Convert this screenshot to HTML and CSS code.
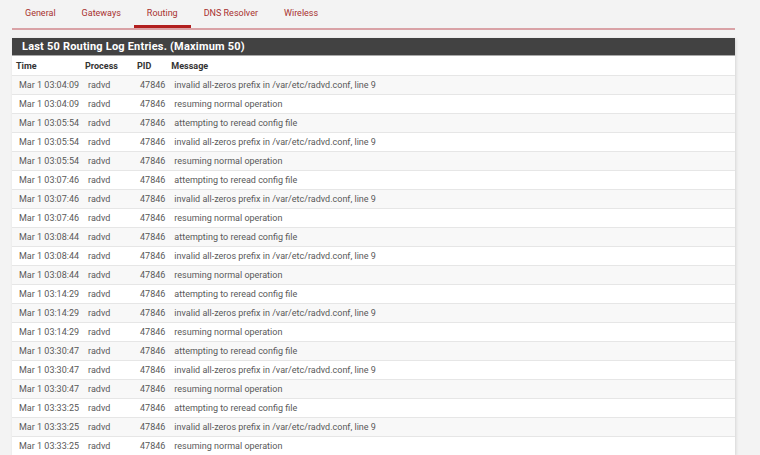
FILE: index.html
```html
<!DOCTYPE html>
<html lang="en">

<head>
    <meta charset="UTF-8">
    <title>Status: System Logs: Routing</title>
    <link rel="stylesheet" href="styles.css">
</head>

<body>
    <ul class="tabs">
        <li><a href="#">General</a></li>
        <li><a href="#">Gateways</a></li>
        <li class="active"><a href="#">Routing</a></li>
        <li><a href="#">DNS Resolver</a></li>
        <li><a href="#">Wireless</a></li>
    </ul>

    <div class="panel">
        <h2 class="panel-title">Last 50 Routing Log Entries. (Maximum 50)</h2>
        <table class="log">
            <thead>
                <tr>
                    <th class="col-time">Time</th>
                    <th class="col-proc">Process</th>
                    <th class="col-pid">PID</th>
                    <th>Message</th>
                </tr>
            </thead>
            <tbody id="logBody"></tbody>
        </table>
    </div>

    <script>
        const times = ['03:04:09', '03:05:54', '03:07:46', '03:08:44', '03:14:29', '03:30:47', '03:33:25'];
        const messages = [
            'invalid all-zeros prefix in /var/etc/radvd.conf, line 9',
            'resuming normal operation',
            'attempting to reread config file'
        ];

        // build the 20 visible entries: each time gets reread / invalid / resuming
        const entries = [];
        times.forEach((t, i) => {
            if (i > 0) entries.push({ time: t, msg: messages[2] });
            entries.push({ time: t, msg: messages[0] });
            entries.push({ time: t, msg: messages[1] });
        });

        const body = document.getElementById('logBody');
        entries.forEach(e => {
            body.innerHTML += `
                <tr>
                    <td>Mar 1 ${e.time}</td>
                    <td>radvd</td>
                    <td>47846</td>
                    <td>${e.msg}</td>
                </tr>`;
        });
    </script>
</body>

</html>
```

FILE: styles.css
```css
body {
    font-family: 'Roboto', 'Liberation Sans', sans-serif;
    background-color: #f3f3f3;
    margin: 0;
    padding: 0 25px 0 12px;
    color: #555;
}

.tabs {
    list-style: none;
    margin: 0;
    padding: 0;
    display: flex;
    height: 28px;
    border-bottom: 2px solid #d9a2a6;
}

.tabs li {
    height: 28px;
}

.tabs a {
    display: block;
    height: 25px;
    line-height: 26px;
    padding: 0 13px;
    font-size: 9px;
    color: #a8312f;
    text-decoration: none;
}

.tabs .active a {
    border-bottom: 3px solid #b21f1f;
}

.panel {
    margin-top: 8px;
    background-color: white;
    box-shadow: 1px 1px 3px rgba(0, 0, 0, 0.12);
}

.panel-title {
    margin: 0;
    height: 17px;
    line-height: 18px;
    padding: 0 10px;
    background-color: #424242;
    border-bottom: 1px solid #a9a9a9;
    color: white;
    font-size: 11px;
    font-weight: bold;
    letter-spacing: 0.2px;
}

.log {
    width: 100%;
    border-collapse: collapse;
    font-size: 9px;
}

.log th {
    text-align: left;
    height: 19px;
    padding: 0 4px;
    font-weight: bold;
    color: #333;
}

.log td {
    height: 18px;
    padding: 0 2px 0 7px;
    border-top: 1px solid #e6e6e6;
    color: #595959;
    white-space: nowrap;
}

.log tbody tr:nth-child(odd) {
    background-color: #f8f8f8;
}

.col-time {
    width: 60px;
}

.col-proc {
    width: 44px;
}

.col-pid {
    width: 26px;
}
```
